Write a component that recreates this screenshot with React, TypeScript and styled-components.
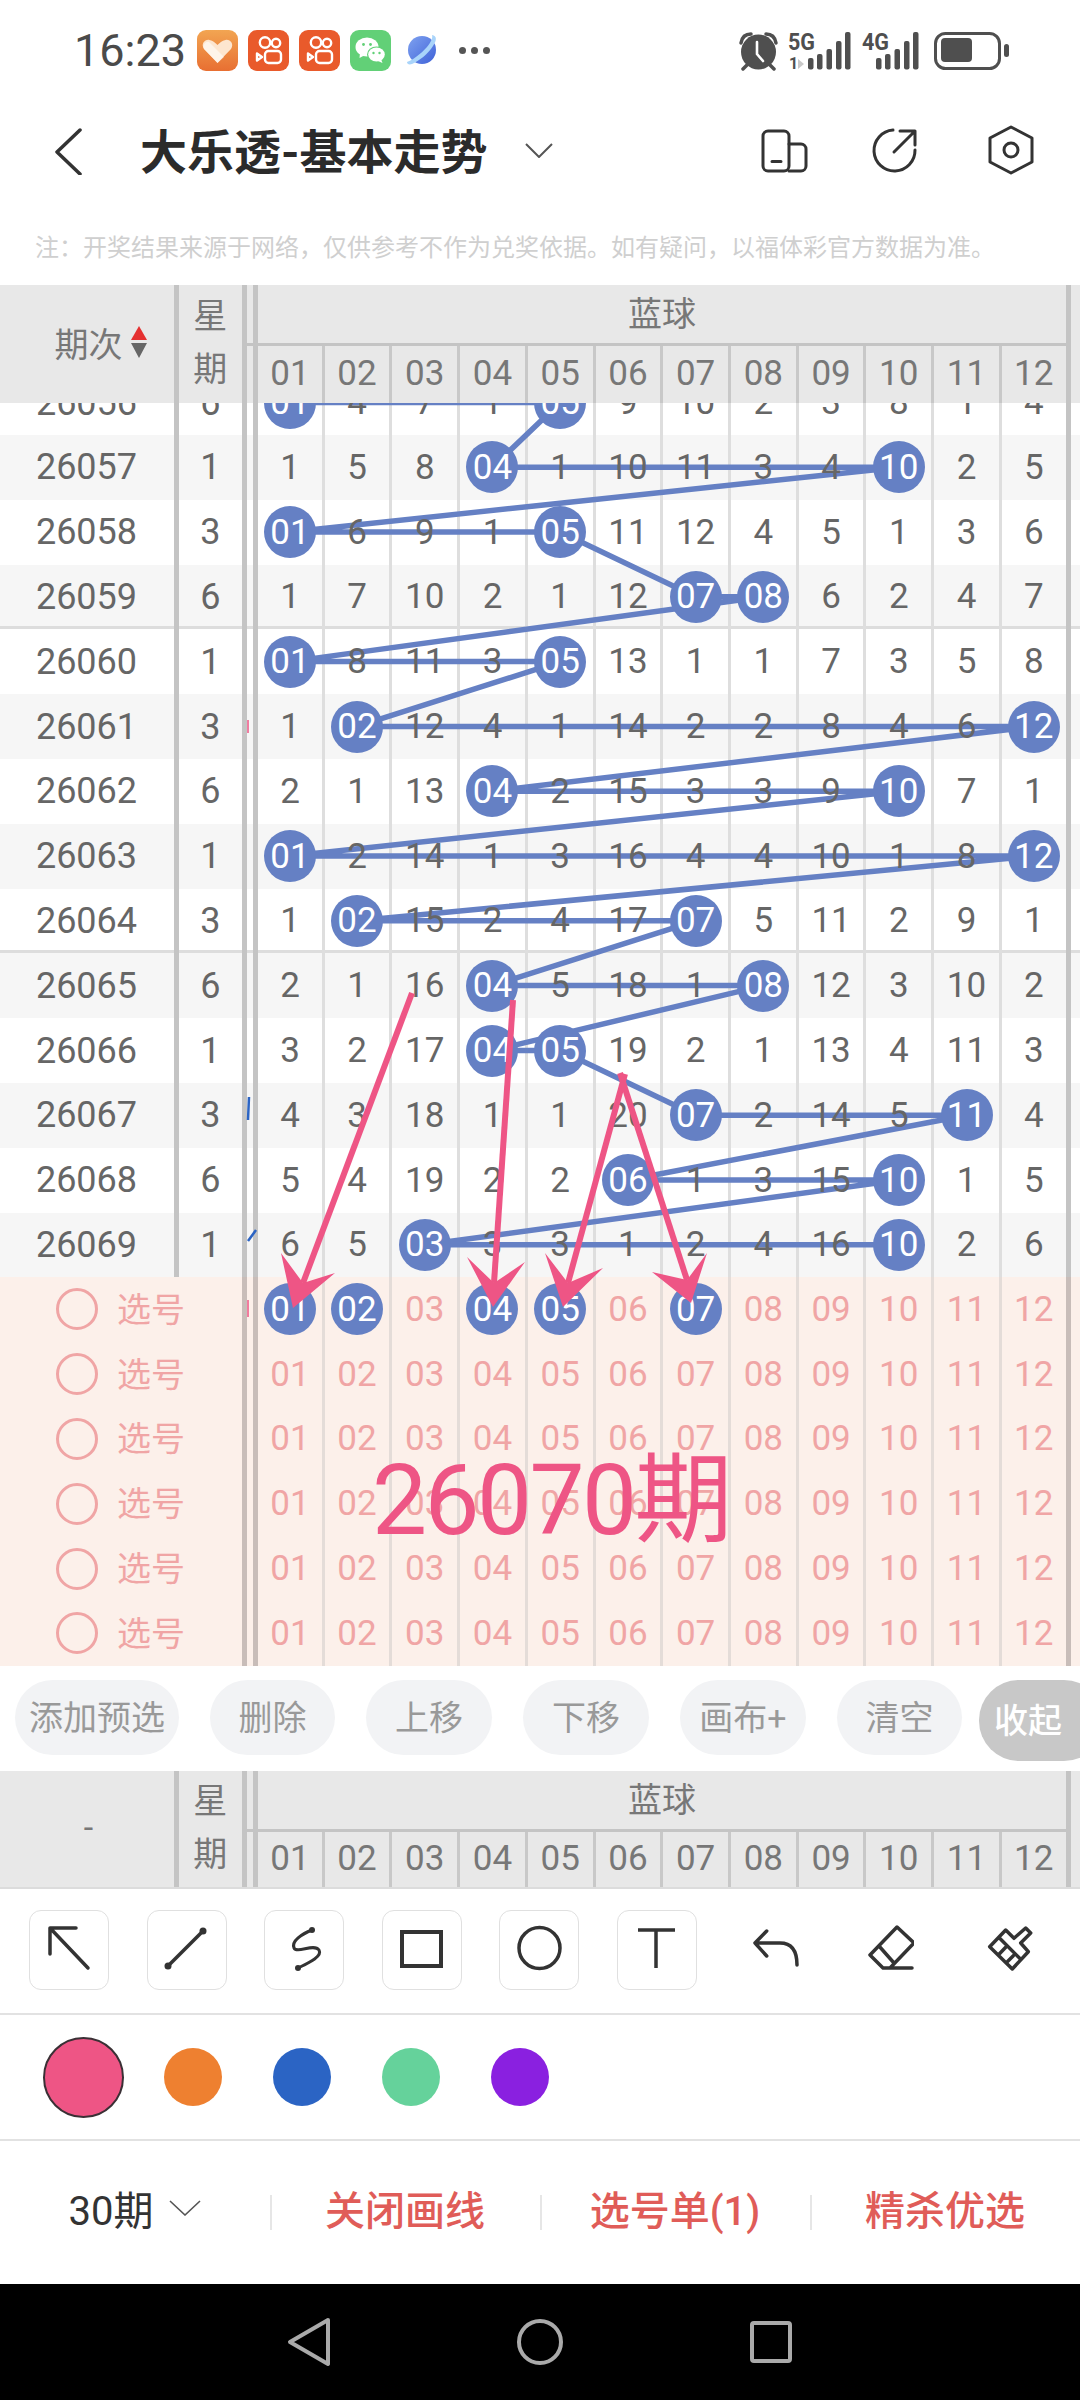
import React from 'react';
import styled, { createGlobalStyle } from 'styled-components';

const GlobalStyle = createGlobalStyle`
    html, body {
        margin: 0;
        padding: 0;
        background: #fff;
        overflow: hidden;
    }
    body {
        font-family: Roboto, "Noto Sans CJK SC", sans-serif;
    }
`;

const NUMBER_COLUMNS = '63.4px repeat(10, 67.73px) 66.73px';
const COLUMNS = `174px 67.7px 16.6px ${NUMBER_COLUMNS} 14.3px`;
const ROW_HEIGHT = 64.8;
const BALL_BLUE = '#6580c4';
const PINK = '#ee5585';

interface Draw {
    period: string;
    week: number;
    balls: number[];
    nums: number[];
    sep?: boolean;
}

const DRAWS: Draw[] = [
    { period: '26056', week: 6, balls: [1, 5], nums: [1, 4, 7, 1, 5, 9, 10, 2, 3, 8, 1, 4] },
    { period: '26057', week: 1, balls: [4, 10], nums: [1, 5, 8, 4, 1, 10, 11, 3, 4, 10, 2, 5] },
    { period: '26058', week: 3, balls: [1, 5], nums: [1, 6, 9, 1, 5, 11, 12, 4, 5, 1, 3, 6] },
    { period: '26059', week: 6, balls: [7, 8], nums: [1, 7, 10, 2, 1, 12, 7, 8, 6, 2, 4, 7], sep: true },
    { period: '26060', week: 1, balls: [1, 5], nums: [1, 8, 11, 3, 5, 13, 1, 1, 7, 3, 5, 8] },
    { period: '26061', week: 3, balls: [2, 12], nums: [1, 2, 12, 4, 1, 14, 2, 2, 8, 4, 6, 12] },
    { period: '26062', week: 6, balls: [4, 10], nums: [2, 1, 13, 4, 2, 15, 3, 3, 9, 10, 7, 1] },
    { period: '26063', week: 1, balls: [1, 12], nums: [1, 2, 14, 1, 3, 16, 4, 4, 10, 1, 8, 12] },
    { period: '26064', week: 3, balls: [2, 7], nums: [1, 2, 15, 2, 4, 17, 7, 5, 11, 2, 9, 1], sep: true },
    { period: '26065', week: 6, balls: [4, 8], nums: [2, 1, 16, 4, 5, 18, 1, 8, 12, 3, 10, 2] },
    { period: '26066', week: 1, balls: [4, 5], nums: [3, 2, 17, 4, 5, 19, 2, 1, 13, 4, 11, 3] },
    { period: '26067', week: 3, balls: [7, 11], nums: [4, 3, 18, 1, 1, 20, 7, 2, 14, 5, 11, 4] },
    { period: '26068', week: 6, balls: [6, 10], nums: [5, 4, 19, 2, 2, 6, 1, 3, 15, 10, 1, 5] },
    { period: '26069', week: 1, balls: [3, 10], nums: [6, 5, 3, 3, 3, 1, 2, 4, 16, 10, 2, 6] },
];

const NUMBERS = Array.from({ length: 12 }, (_, i) => String(i + 1).padStart(2, '0'));
const ACTIONS = [
    { label: '添加预选', width: 164 },
    { label: '删除', width: 125 },
    { label: '上移', width: 126 },
    { label: '下移', width: 126 },
    { label: '画布+', width: 126 },
    { label: '清空', width: 125 },
];
const SWATCHES = ['#ee8030', '#2b64c4', '#65d29b', '#8a20e0'];

const ARROWS = [
    { from: [412, 993], tip: [293, 1308], a: [281, 1253], b: [335, 1273], notch: [303, 1283] },
    { from: [513, 1000], tip: [493, 1307], a: [467, 1257], b: [525, 1262], notch: [494, 1283] },
    { from: [625, 1074], tip: [563, 1307], a: [545, 1253], b: [603, 1268], notch: [568, 1283] },
    { from: [620, 1073], tip: [691, 1303], a: [652, 1272], b: [707, 1253], notch: [687, 1280] },
];

const Page = styled.div`
    width: 1080px;
    height: 2400px;
    display: flex;
    flex-direction: column;
    overflow: hidden;
    background: #fff;
`;

/* status bar */
const StatusBar = styled.div`
    height: 100px;
    flex: none;
    display: flex;
    align-items: center;
    padding-left: 74px;
`;

const Time = styled.div`
    width: 110px;
    margin-right: 13px;
    font-size: 45px;
    color: #4a4a4a;
    white-space: nowrap;
`;

const AppIcons = styled.div`
    display: flex;
    align-items: center;
    gap: 10px;
`;

const MoreDots = styled.div`
    margin-left: 22px;
    display: flex;
    gap: 5px;
`;

const Dot = styled.span`
    width: 7px;
    height: 7px;
    border-radius: 50%;
    background: #555;
`;

const StatusRight = styled.svg`
    margin-left: auto;
    margin-right: 65px;
    flex: none;
`;

/* title bar */
const NavBar = styled.div`
    height: 100px;
    flex: none;
    display: flex;
    align-items: center;
    padding: 0 44px 0 50px;
`;

const Title = styled.h1`
    margin: 0 36px 0 40px;
    padding-bottom: 4px;
    font-size: 47px;
    font-weight: 700;
    color: #2b2b2b;
    white-space: nowrap;
`;

const NavActions = styled.div`
    margin-left: auto;
    display: flex;
    gap: 64px;
`;

const Note = styled.div`
    height: 85px;
    flex: none;
    box-sizing: border-box;
    padding: 32px 0 0 35px;
    font-size: 24px;
    line-height: 32px;
    color: #cfcfcf;
    white-space: nowrap;
`;

/* table head */
const Head = styled.div<{ $height: number; $underline?: boolean }>`
    height: ${(p) => p.$height}px;
    flex: none;
    display: grid;
    grid-template-columns: ${COLUMNS};
    background: #e8e8e8;
    color: #777;
    box-sizing: border-box;
    border-bottom: ${(p) => (p.$underline ? '2px solid #dcdcdc' : 'none')};
    position: relative;
    z-index: 2;
`;

const PeriodHead = styled.div<{ $sortable?: boolean }>`
    display: flex;
    align-items: center;
    justify-content: center;
    gap: 8px;
    padding-left: ${(p) => (p.$sortable ? 27 : 3)}px;
    padding-bottom: 4px;
    font-size: 34px;
`;

const SortMarks = styled.div`
    display: flex;
    flex-direction: column;
    gap: 3px;
`;

const SortMark = styled.span<{ $down?: boolean }>`
    width: 0;
    height: 0;
    border-left: 8px solid transparent;
    border-right: 8px solid transparent;
    border-bottom: ${(p) => (p.$down ? 'none' : '14px solid #e53030')};
    border-top: ${(p) => (p.$down ? '15px solid #666' : 'none')};
`;

const WeekHead = styled.div`
    border-left: 5px solid #c4c4c4;
    display: flex;
    flex-direction: column;
    align-items: center;
    justify-content: center;
    gap: 19px;
    padding-bottom: 3px;
    font-size: 34px;
    line-height: 34px;
`;

const Rail = styled.div<{ $tone?: string }>`
    box-sizing: border-box;
    border-left: 5.5px solid ${(p) => p.$tone || '#c4c4c4'};
    border-right: 5.5px solid ${(p) => p.$tone || '#c4c4c4'};
`;

const HeadRail = styled(Rail)`
    background: linear-gradient(#c4c4c4, #c4c4c4) 0 57.5px / 100% 3.3px no-repeat;
`;

const Edge = styled.div<{ $tone?: string }>`
    border-left: 5px solid ${(p) => p.$tone || '#c4c4c4'};
`;

const BlueHead = styled.div`
    grid-column: 4 / 16;
    display: flex;
    flex-direction: column;
    min-height: 0;
`;

const BlueTitle = styled.div`
    height: 61px;
    flex: none;
    display: flex;
    align-items: center;
    justify-content: center;
    box-sizing: border-box;
    border-bottom: 3.3px solid #c4c4c4;
    padding-bottom: 6px;
    font-size: 34px;
`;

const NumberHeads = styled.div`
    flex: 1;
    display: grid;
    grid-template-columns: ${NUMBER_COLUMNS};
`;

const NumberHead = styled.div<{ $first?: boolean }>`
    display: flex;
    align-items: center;
    justify-content: center;
    box-sizing: border-box;
    border-left: ${(p) => (p.$first ? 'none' : '3px solid #c8c8c8')};
    padding-bottom: 2px;
    font-size: 35px;
`;

/* table body */
const Board = styled.div`
    position: relative;
    flex: none;
`;

const TrendBody = styled.div`
    height: 874px;
    overflow: hidden;
`;

const TrendInner = styled.div`
    position: relative;
    margin-top: -32.8px;
`;

const TrendLines = styled.svg`
    position: absolute;
    left: 0;
    top: 0;
    z-index: 1;
    pointer-events: none;
`;

const Row = styled.div<{ $shade?: boolean; $sep?: boolean }>`
    height: ${ROW_HEIGHT}px;
    display: grid;
    grid-template-columns: ${COLUMNS};
    background: ${(p) => (p.$shade ? '#f6f6f6' : '#fff')};
    box-shadow: ${(p) => (p.$sep ? 'inset 0 -3px 0 #dddddd' : 'none')};
    color: #666;
`;

const PeriodCell = styled.div`
    display: flex;
    align-items: center;
    justify-content: center;
    font-size: 36px;
    padding-right: 1px;
`;

const WeekCell = styled(PeriodCell)`
    border-left: 5px solid #c4c4c4;
    padding-right: 0;
`;

const NumCell = styled.div<{ $line?: string; $first?: boolean }>`
    display: flex;
    align-items: center;
    justify-content: center;
    box-sizing: border-box;
    border-left: ${(p) => (p.$first ? 'none' : `3.3px solid ${p.$line || '#dedede'}`)};
`;

const Num = styled.span<{ $pink?: boolean }>`
    position: relative;
    z-index: 2;
    font-size: 35px;
    color: ${(p) => (p.$pink ? '#f0a5a5' : '#666')};
`;

const Ball = styled.span`
    position: relative;
    z-index: 2;
    flex: none;
    width: 52px;
    height: 52px;
    border-radius: 50%;
    background: ${BALL_BLUE};
    display: flex;
    align-items: center;
    justify-content: center;
    color: #fff;
    font-size: 35px;
`;

/* pick rows */
const PickPanel = styled.div`
    height: 389px;
    background: #fcf0ea;
`;

const PickRow = styled.div`
    height: ${ROW_HEIGHT}px;
    display: grid;
    grid-template-columns: ${COLUMNS};
`;

const PickLead = styled.div`
    grid-column: 1 / 3;
    display: flex;
    align-items: center;
    padding-left: 56px;
    gap: 19px;
`;

const PickCircle = styled.span`
    width: 42px;
    height: 42px;
    box-sizing: border-box;
    border: 3px solid #f0a5a5;
    border-radius: 50%;
`;

const PickLabel = styled.span`
    padding-bottom: 4px;
    font-size: 34px;
    color: #f0a5a5;
`;

const BoardOverlay = styled.svg`
    position: absolute;
    left: 0;
    top: 0;
    z-index: 5;
    pointer-events: none;
`;

const IssueMark = styled.div`
    position: absolute;
    left: 372px;
    top: 1033px;
    z-index: 6;
    font-size: 98px;
    line-height: 130px;
    letter-spacing: -2.6px;
    color: ${PINK};
    white-space: nowrap;
`;

/* action pills */
const Actions = styled.div`
    height: 105px;
    flex: none;
    box-sizing: border-box;
    padding: 14px 0 0 15px;
    display: flex;
    align-items: flex-start;
    gap: 31px;
`;

const Pill = styled.div<{ $width: number }>`
    flex: none;
    width: ${(p) => p.$width}px;
    height: 75px;
    box-sizing: border-box;
    padding-bottom: 4px;
    border-radius: 38px;
    background: #f2f3f5;
    color: #999;
    font-size: 34px;
    display: flex;
    align-items: center;
    justify-content: center;
    white-space: nowrap;
`;

const CollapsePill = styled.div`
    flex: none;
    margin-left: -14px;
    width: 125px;
    height: 81px;
    box-sizing: border-box;
    padding: 0 0 4px 15px;
    border-radius: 40px;
    background: #c8c8c8;
    color: #fff;
    font-size: 34px;
    font-weight: 500;
    display: flex;
    align-items: center;
    white-space: nowrap;
`;

/* drawing tools */
const Tools = styled.div`
    height: 126px;
    flex: none;
    box-sizing: border-box;
    border-bottom: 2px solid #e2e2e2;
    padding: 21px 0 0 29px;
    display: flex;
    align-items: flex-start;
    gap: 37.6px;
`;

const ToolButton = styled.div`
    flex: none;
    width: 80px;
    height: 80px;
    box-sizing: border-box;
    border: 1.5px solid #e0e0e0;
    border-radius: 12px;
`;

const ToolGlyph = styled.svg`
    display: block;
    margin: -1.5px;
`;

const PlainTool = styled.svg<{ $left: number }>`
    flex: none;
    margin: 15px 0 0 ${(p) => p.$left}px;
`;

const Colors = styled.div`
    height: 126px;
    flex: none;
    box-sizing: border-box;
    border-bottom: 2px solid #e2e2e2;
    padding-left: 43px;
    display: flex;
    align-items: center;
    gap: 51px;
`;

const Swatch = styled.span<{ $color: string; $active?: boolean }>`
    flex: none;
    box-sizing: border-box;
    width: ${(p) => (p.$active ? 81 : 58)}px;
    height: ${(p) => (p.$active ? 81 : 58)}px;
    margin-right: ${(p) => (p.$active ? -11 : 0)}px;
    border-radius: 50%;
    background: ${(p) => p.$color};
    border: ${(p) => (p.$active ? '2px solid #3a3035' : 'none')};
`;

/* bottom bar */
const BottomBar = styled.div`
    height: 143px;
    flex: none;
    display: grid;
    grid-template-columns: repeat(4, 270px);
`;

const BottomItem = styled.div<{ $plain?: boolean }>`
    position: relative;
    display: flex;
    align-items: center;
    justify-content: center;
    gap: 16px;
    padding-bottom: 9px;
    font-size: 40px;
    font-weight: ${(p) => (p.$plain ? 400 : 500)};
    color: ${(p) => (p.$plain ? '#333' : '#e05c58')};
    white-space: nowrap;
    &:not(:first-child)::before {
        content: '';
        position: absolute;
        left: 0;
        top: 54px;
        width: 1.5px;
        height: 35px;
        background: #e6e6e6;
    }
`;

const HomeBar = styled.div`
    height: 116px;
    flex: none;
    background: #000;
    box-sizing: border-box;
    padding-left: 287px;
    display: flex;
    align-items: center;
    gap: 183px;
`;

const ballCenter = (rowIndex: number, ball: number) => ({
    x: ball === 1 ? 290 : 357.1 + (ball - 2) * 67.73,
    y: (rowIndex + 0.5) * ROW_HEIGHT,
});

const TREND_POINTS = DRAWS.flatMap((draw, i) => draw.balls.map((ball) => ballCenter(i, ball)))
    .map((p) => `${p.x},${p.y}`)
    .join(' ');

const TableHead: React.FC<{ underline?: boolean; sortable?: boolean; children: React.ReactNode }> = ({
    underline,
    sortable,
    children,
}) => (
    <Head $height={118} $underline={underline}>
        <PeriodHead $sortable={sortable}>{children}</PeriodHead>
        <WeekHead>
            <span>星</span>
            <span>期</span>
        </WeekHead>
        <HeadRail />
        <BlueHead>
            <BlueTitle>蓝球</BlueTitle>
            <NumberHeads>
                {NUMBERS.map((n, col) => (
                    <NumberHead key={n} $first={col === 0}>
                        {n}
                    </NumberHead>
                ))}
            </NumberHeads>
        </BlueHead>
        <Edge />
    </Head>
);

const HeartApp = () => (
    <svg width="41" height="41" viewBox="0 0 41 41">
        <defs>
            <linearGradient id="heartBg" x1="0" y1="0" x2="0" y2="1">
                <stop offset="0" stopColor="#f2a552" />
                <stop offset="1" stopColor="#e86f32" />
            </linearGradient>
        </defs>
        <rect width="41" height="41" rx="9" fill="url(#heartBg)" />
        <path
            d="M20.5 33 L7 19 C3.5 14 8 9 12.5 10 C16 10.5 18.5 13 20.5 15 C22.5 13 25 10.5 28.5 10 C33 9 37.5 14 34 19 Z"
            fill="#fde6cf"
        />
        <path d="M12 12 L27 27 L20.5 33 L7 19 C5 15 9 11 12 12 Z" fill="#fff" opacity="0.55" />
    </svg>
);

const ReelApp = () => (
    <svg width="41" height="41" viewBox="0 0 41 41">
        <rect width="41" height="41" rx="9" fill="#e95a2b" />
        <g fill="none" stroke="#fff" strokeWidth="2.4">
            <circle cx="17" cy="12.5" r="5.2" />
            <circle cx="28" cy="13" r="4.2" />
            <rect x="17" y="21" width="16" height="12" rx="3.5" />
            <path d="M9 23.5 L14 27 L9 30.5 Z" strokeLinejoin="round" />
        </g>
    </svg>
);

const WeChatApp = () => (
    <svg width="41" height="41" viewBox="0 0 41 41">
        <rect width="41" height="41" rx="9" fill="#62d077" />
        <ellipse cx="17" cy="17" rx="11.5" ry="9.5" fill="#fff" />
        <path d="M10 23 L9.5 28 L15 25 Z" fill="#fff" />
        <ellipse cx="26.5" cy="24.5" rx="9.5" ry="8" fill="#62d077" />
        <ellipse cx="26.5" cy="24.5" rx="8.3" ry="7" fill="#fff" />
        <path d="M31 29 L32.5 33 L28 31 Z" fill="#fff" />
        <circle cx="13.5" cy="14.5" r="1.4" fill="#62d077" />
        <circle cx="20.5" cy="14.5" r="1.4" fill="#62d077" />
        <circle cx="23.5" cy="23" r="1.2" fill="#62d077" />
        <circle cx="29.5" cy="23" r="1.2" fill="#62d077" />
    </svg>
);

const PlanetIcon = styled.svg`
    margin-left: 6px;
`;

const PlanetApp = () => (
    <PlanetIcon width="30" height="32" viewBox="0 0 30 32">
        <defs>
            <linearGradient id="planetBg" x1="0" y1="0" x2="1" y2="1">
                <stop offset="0" stopColor="#7fa2f0" />
                <stop offset="1" stopColor="#3f62d8" />
            </linearGradient>
        </defs>
        <circle cx="15" cy="16" r="14" fill="url(#planetBg)" />
        <path d="M25 1 C30 2 30 6 26 12 C21 20 12 27 5 30 C2 31 0 30 0 28 C4 27 14 20 20 13 C24 8 26 4 25 1 Z" fill="#a9d4fa" />
    </PlanetIcon>
);

const SignalBars: React.FC<{ x: number }> = ({ x }) => (
    <g fill="#4f4f4f">
        {[
            [0, 58],
            [9, 54],
            [18.5, 49],
            [28, 41],
            [37, 32],
        ].map(([dx, top]) => (
            <rect key={dx} x={x + dx} y={top} width="5.5" height={69.5 - top} rx="2" />
        ))}
    </g>
);

const StatusIcons = () => (
    <StatusRight width="280" height="100" viewBox="735 0 280 100">
        <g stroke="#4f4f4f" strokeLinecap="round">
            <path d="M741 43 C742 37 746 34 751 34" fill="none" strokeWidth="3.5" />
            <path d="M776 43 C775 37 771 34 766 34" fill="none" strokeWidth="3.5" />
            <path d="M747 65 L743 69 M770 65 L774 69" strokeWidth="3.5" />
        </g>
        <circle cx="758.5" cy="52" r="17.5" fill="#4f4f4f" />
        <path d="M757 42 V54 L763 61" fill="none" stroke="#fff" strokeWidth="2.6" strokeLinecap="round" />
        <text x="788" y="50" fontSize="23" fontWeight="700" fill="#4f4f4f" textLength="27" lengthAdjust="spacingAndGlyphs">
            5G
        </text>
        <text x="789" y="69" fontSize="16" fontWeight="700" fill="#4f4f4f">
            1
        </text>
        <path d="M798 59 L804 64 L798 69 Z" fill="#c9c9c9" />
        <SignalBars x={808} />
        <text x="862" y="50" fontSize="23" fontWeight="700" fill="#4f4f4f" textLength="27" lengthAdjust="spacingAndGlyphs">
            4G
        </text>
        <SignalBars x={876} />
        <rect x="935.5" y="33.5" width="64" height="35" rx="10" fill="none" stroke="#4f4f4f" strokeWidth="3" />
        <rect x="941" y="38" width="31" height="24" rx="4" fill="#4f4f4f" />
        <rect x="1004" y="44" width="5" height="13" rx="2.5" fill="#4f4f4f" />
    </StatusRight>
);

const navStroke = { fill: 'none', stroke: '#333', strokeWidth: 3, strokeLinecap: 'round', strokeLinejoin: 'round' } as const;
const toolStroke = { fill: 'none', stroke: '#333', strokeWidth: 3.5, strokeLinecap: 'round', strokeLinejoin: 'round' } as const;

const Trend = () => (
    <TrendBody>
        <TrendInner>
            {DRAWS.map((draw, i) => (
                <Row key={draw.period} $shade={i % 2 === 1} $sep={draw.sep}>
                    <PeriodCell>{draw.period}</PeriodCell>
                    <WeekCell>{draw.week}</WeekCell>
                    <Rail />
                    {draw.nums.map((n, col) => (
                        <NumCell key={col} $first={col === 0}>
                            {draw.balls.includes(col + 1) ? <Ball>{NUMBERS[col]}</Ball> : <Num>{n}</Num>}
                        </NumCell>
                    ))}
                    <Edge />
                </Row>
            ))}
            <TrendLines width="1080" height={ROW_HEIGHT * DRAWS.length}>
                <polyline points={TREND_POINTS} fill="none" stroke={BALL_BLUE} strokeWidth="5.5" />
            </TrendLines>
        </TrendInner>
    </TrendBody>
);

const Picks = () => (
    <PickPanel>
        {Array.from({ length: 6 }, (_, row) => (
            <PickRow key={row}>
                <PickLead>
                    <PickCircle />
                    <PickLabel>选号</PickLabel>
                </PickLead>
                <Rail $tone="#c8bdb9" />
                {NUMBERS.map((n, col) => (
                    <NumCell key={n} $line="#e4dcd8" $first={col === 0}>
                        {row === 0 && [0, 1, 3, 4, 6].includes(col) ? <Ball>{n}</Ball> : <Num $pink>{n}</Num>}
                    </NumCell>
                ))}
                <Edge $tone="#c8bdb9" />
            </PickRow>
        ))}
    </PickPanel>
);

const App: React.FC = () => {
    return (
        <Page>
            <GlobalStyle />
            <StatusBar>
                <Time>16:23</Time>
                <AppIcons>
                    <HeartApp />
                    <ReelApp />
                    <ReelApp />
                    <WeChatApp />
                    <PlanetApp />
                </AppIcons>
                <MoreDots>
                    <Dot />
                    <Dot />
                    <Dot />
                </MoreDots>
                <StatusIcons />
            </StatusBar>

            <NavBar>
                <svg width="50" height="50" viewBox="0 0 50 50">
                    <path d="M30 5 L7 27 L30 49" {...navStroke} strokeWidth={3.5} />
                </svg>
                <Title>大乐透-基本走势</Title>
                <svg width="30" height="16" viewBox="0 0 30 16">
                    <path d="M2 2 L15 15 L28 2" fill="none" stroke="#555" strokeWidth="2" />
                </svg>
                <NavActions>
                    <svg width="50" height="54" viewBox="0 0 50 54">
                        <rect x="5" y="8" width="26" height="40" rx="5" {...navStroke} />
                        <path d="M31 21 H43 a5 5 0 0 1 5 5 V43 a5 5 0 0 1 -5 5 H31 M14 38.5 H23" {...navStroke} />
                    </svg>
                    <svg width="50" height="54" viewBox="0 0 50 54">
                        <path d="M21 7 A20.5 20.5 0 1 0 43 27 M22 29 L43 8 M28 8 H43 V22" {...navStroke} />
                    </svg>
                    <svg width="50" height="54" viewBox="0 0 50 54">
                        <path d="M25 4 L46 15 V39 L25 50 L4 39 V15 Z" {...navStroke} />
                        <circle cx="25" cy="27" r="7" {...navStroke} />
                    </svg>
                </NavActions>
            </NavBar>

            <Note>注：开奖结果来源于网络，仅供参考不作为兑奖依据。如有疑问，以福体彩官方数据为准。</Note>

            <TableHead sortable>
                <span>期次</span>
                <SortMarks>
                    <SortMark />
                    <SortMark $down />
                </SortMarks>
            </TableHead>

            <Board>
                <Trend />
                <Picks />
                <BoardOverlay width="1080" height="1263" viewBox="0 403 1080 1263">
                    <path d="M249 1097 L248 1120 M256 1230 L248 1241" stroke="#2b64c4" strokeWidth="2.5" fill="none" />
                    <path d="M248 720 V733 M248 1300 V1317" stroke={PINK} strokeWidth="1.5" fill="none" />
                    {ARROWS.map((arrow) => (
                        <g key={arrow.tip.join()}>
                            <line
                                x1={arrow.from[0]}
                                y1={arrow.from[1]}
                                x2={arrow.notch[0]}
                                y2={arrow.notch[1]}
                                stroke={PINK}
                                strokeWidth="6"
                            />
                            <polygon
                                points={[arrow.tip, arrow.a, arrow.notch, arrow.b].map((p) => p.join(',')).join(' ')}
                                fill={PINK}
                            />
                        </g>
                    ))}
                </BoardOverlay>
                <IssueMark>26070期</IssueMark>
            </Board>

            <Actions>
                {ACTIONS.map((action) => (
                    <Pill key={action.label} $width={action.width}>
                        {action.label}
                    </Pill>
                ))}
                <CollapsePill>收起</CollapsePill>
            </Actions>

            <TableHead underline>
                <span>-</span>
            </TableHead>

            <Tools>
                <ToolButton>
                    <ToolGlyph width="80" height="80" viewBox="0 0 80 80">
                        <path d="M59 58 L21 18 M21 44 V18 H47" {...toolStroke} />
                    </ToolGlyph>
                </ToolButton>
                <ToolButton>
                    <ToolGlyph width="80" height="80" viewBox="0 0 80 80">
                        <path d="M22 56 L57 21" {...toolStroke} />
                        <circle cx="22" cy="56" r="3.5" fill="#333" />
                        <circle cx="57" cy="21" r="3.5" fill="#333" />
                    </ToolGlyph>
                </ToolButton>
                <ToolButton>
                    <ToolGlyph width="80" height="80" viewBox="0 0 80 80">
                        <path d="M48 20 C38 24 27 31 30 38 C33 44 50 33 55 40 C59 47 42 54 34 58" {...toolStroke} strokeWidth={3} />
                        <circle cx="48" cy="20" r="3" fill="#333" />
                        <circle cx="34" cy="58" r="3" fill="#333" />
                    </ToolGlyph>
                </ToolButton>
                <ToolButton>
                    <ToolGlyph width="80" height="80" viewBox="0 0 80 80">
                        <rect x="21" y="22" width="39" height="34" fill="none" stroke="#333" strokeWidth="4" />
                    </ToolGlyph>
                </ToolButton>
                <ToolButton>
                    <ToolGlyph width="80" height="80" viewBox="0 0 80 80">
                        <circle cx="40.5" cy="38" r="20.5" fill="none" stroke="#333" strokeWidth="3.5" />
                    </ToolGlyph>
                </ToolButton>
                <ToolButton>
                    <ToolGlyph width="80" height="80" viewBox="0 0 80 80">
                        <path d="M22 20 H59 M40 20 V58" fill="none" stroke="#333" strokeWidth="3.5" />
                    </ToolGlyph>
                </ToolButton>
                <PlainTool $left={15} width="50" height="50" viewBox="0 0 50 50">
                    <path d="M16.7 6 L5 18 L16.7 31 M5 18 H30 Q47 18 47 40" {...toolStroke} />
                </PlainTool>
                <PlainTool $left={27} width="50" height="50" viewBox="0 0 50 50">
                    <path d="M33 2 L50 18 L26 43 H19 L6 30 Z M15 21 L30 38 M19 43 H48" {...toolStroke} />
                </PlainTool>
                <PlainTool $left={32} width="50" height="50" viewBox="0 0 50 50">
                    <path
                        d="M41.7 3 L46.7 8 L36.7 18 L44.3 26.7 L28.3 44 L5.7 21.7 L21.7 5 L30 13.3 Z M15.7 13.3 L36.7 34.3 M14.3 30 L21.7 22.3 M22.3 37.7 L29.3 30.7"
                        {...toolStroke}
                    />
                </PlainTool>
            </Tools>

            <Colors>
                <Swatch $color={PINK} $active />
                {SWATCHES.map((color) => (
                    <Swatch key={color} $color={color} />
                ))}
            </Colors>

            <BottomBar>
                <BottomItem $plain>
                    <span>30期</span>
                    <svg width="32" height="16" viewBox="0 0 32 16">
                        <path d="M1 1 L16 15 L31 1" fill="none" stroke="#555" strokeWidth="1.6" />
                    </svg>
                </BottomItem>
                <BottomItem>关闭画线</BottomItem>
                <BottomItem>选号单(1)</BottomItem>
                <BottomItem>精杀优选</BottomItem>
            </BottomBar>

            <HomeBar>
                <svg width="45" height="50" viewBox="0 0 45 50">
                    <path d="M41 3 L3 25 L41 47 Z" fill="none" stroke="#aaa" strokeWidth="4" strokeLinejoin="round" />
                </svg>
                <svg width="50" height="50" viewBox="0 0 50 50">
                    <circle cx="25" cy="25" r="21" fill="none" stroke="#aaa" strokeWidth="4" />
                </svg>
                <svg width="46" height="46" viewBox="0 0 46 46">
                    <rect x="4" y="4" width="38" height="38" rx="2" fill="none" stroke="#aaa" strokeWidth="4" />
                </svg>
            </HomeBar>
        </Page>
    );
};

export default App;
